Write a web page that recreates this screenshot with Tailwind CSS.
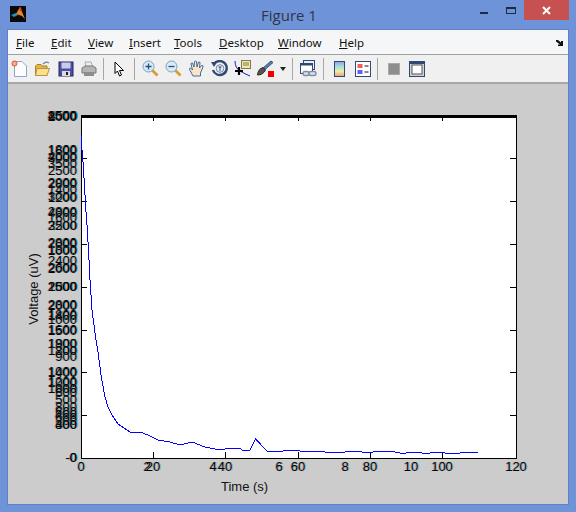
<!DOCTYPE html>
<html lang="en">
<head>
    <meta charset="UTF-8">
    <title>Figure 1</title>
    <script src="https://cdn.jsdelivr.net/npm/@tailwindcss/browser@4"></script>
</head>
<body class="w-[576px] h-[512px] overflow-hidden bg-[#6f93d9] font-['Noto_Sans',sans-serif]">
    <!-- title bar -->
    <header class="h-[30px] flex items-start relative">
        <svg class="absolute left-[10px] top-[6px] w-4 h-4" viewBox="0 0 16 16">
            <rect width="16" height="16" fill="#0a0a0a"/>
            <path d="M1 9 L6 7 L8 9 L4 11Z" fill="#2a8fb0"/>
            <path d="M6 8 L10 1 L15 13 L12 10 L9 9Z" fill="#e8862a"/>
            <path d="M9 2 L11 1 L12 6 L10 5Z" fill="#c84a18"/>
        </svg>
        <h1 class="flex-1 text-center text-[15px] leading-[30px] text-[#2f3646] pl-[2px] font-['Open_Sans',sans-serif]">Figure 1</h1>
        <div class="absolute left-[480px] top-[12px] w-[8px] h-[2px] bg-[#1d2b44]"></div>
        <div class="absolute left-[506px] top-[7px] w-[10px] h-[7px] border border-t-2 border-[#1d2b44]"></div>
        <div class="absolute left-[524px] top-0 w-[45px] h-[20px] bg-[#c75050] flex items-center justify-center">
            <svg class="w-[9px] h-[9px]" viewBox="0 0 9 9"><path d="M1 1 L8 8 M8 1 L1 8" stroke="#fff" stroke-width="2"/></svg>
        </div>
    </header>

    <main class="mx-[8px] w-[560px] h-[474px] flex flex-col bg-[#f5f6f7] outline outline-[#6380c4]">
        <!-- menu -->
        <nav class="h-[25px] pt-[1px] flex items-center relative text-[11.5px] text-[#111] border-b border-[#a0a0a0] pl-[8px]">
            <span class="w-[35px]"><u>F</u>ile</span>
            <span class="w-[37px]"><u>E</u>dit</span>
            <span class="w-[41px]"><u>V</u>iew</span>
            <span class="w-[45px]"><u>I</u>nsert</span>
            <span class="w-[45px]"><u>T</u>ools</span>
            <span class="w-[59px]"><u>D</u>esktop</span>
            <span class="w-[61px]"><u>W</u>indow</span>
            <span><u>H</u>elp</span>
            <svg class="absolute left-[548px] top-[10px] w-[7px] h-[6px]" viewBox="0 0 7 6"><path d="M0 0 H2 L5 2.5 V1 H7 V6 H2 V4.5 H4 L0 1.5Z" fill="#111"/></svg>
        </nav>

        <!-- toolbar -->
        <div class="h-[29px] flex items-center border-b-2 border-[#a6a6a6] bg-[#f0f0f0]">
            <span class="w-[23px] flex justify-center">
                <svg class="w-[17px] h-[18px]" viewBox="0 0 17 18"><path d="M3.5 1.5 H11 L15.5 6 V16.5 H3.5Z" fill="#fdfdff" stroke="#8fa6c4"/><circle cx="3.5" cy="3.5" r="2.5" fill="#f4b08c" stroke="#e0552a"/></svg>
            </span>
            <span class="w-[23px] flex justify-center">
                <svg class="w-[17px] h-[16px]" viewBox="0 0 17 16"><path d="M1.5 14.5 V5 L3 3.5 H7 L8 5 H13 V14.5Z" fill="#e2b64a" stroke="#a8852e"/><path d="M1.5 14.5 L3 7.5 H15.5 L13 14.5Z" fill="#fbe08e" stroke="#b8943a"/><path d="M9 3 Q12 0 15 2" fill="none" stroke="#6a86a8" stroke-width="1.2"/></svg>
            </span>
            <span class="w-[23px] flex justify-center">
                <svg class="w-[16px] h-[16px]" viewBox="0 0 16 16"><rect x="1" y="1" width="14" height="14" fill="#4a4fa8" stroke="#22265c"/><rect x="3.5" y="1.5" width="9" height="6" fill="#c9cbe8"/><rect x="4" y="10" width="8" height="5" fill="#dcdcdc"/><rect x="8" y="11" width="2" height="3" fill="#222"/></svg>
            </span>
            <span class="w-[23px] flex justify-center">
                <svg class="w-[16px] h-[16px]" viewBox="0 0 16 16"><path d="M4 1 H10 L12 6 H5Z" fill="#e8eef4" stroke="#9fb0c0"/><path d="M1 7 L4 5 H12 L15 7 V12 H1Z" fill="#b5b5b5" stroke="#777"/><rect x="3" y="11" width="10" height="4" fill="#8d8d8d"/></svg>
            </span>
            <span class="w-px h-[22px] ml-[3px] mr-[4px] bg-[#a6a6a6]"></span>
            <span class="w-[23px] flex justify-center">
                <svg class="w-[11px] h-[16px]" viewBox="0 0 11 16"><path d="M1 1 V12.5 L3.5 10 L5.5 15 L7.5 14 L5.5 9.5 H9.5Z" fill="#fff" stroke="#000"/></svg>
            </span>
            <span class="w-px h-[22px] ml-[3px] mr-[4px] bg-[#a6a6a6]"></span>
            <span class="w-[23px] flex justify-center">
                <svg class="w-[17px] h-[17px]" viewBox="0 0 17 17"><path d="M10 10 L15.5 15.5" stroke="#d99a2e" stroke-width="2.6"/><circle cx="6.5" cy="6.5" r="5.5" fill="#d7ebf7" stroke="#7d9fbd"/><path d="M3.5 6.5 H9.5 M6.5 3.5 V9.5" stroke="#24527e" stroke-width="1.3"/></svg>
            </span>
            <span class="w-[23px] flex justify-center">
                <svg class="w-[17px] h-[17px]" viewBox="0 0 17 17"><path d="M10 10 L15.5 15.5" stroke="#d99a2e" stroke-width="2.6"/><circle cx="6.5" cy="6.5" r="5.5" fill="#d7ebf7" stroke="#7d9fbd"/><path d="M3.5 6.5 H9.5" stroke="#24527e" stroke-width="1.3"/></svg>
            </span>
            <span class="w-[23px] flex justify-center">
                <svg class="w-[17px] h-[17px]" viewBox="0 0 17 17"><path d="M5 16 L1.5 9.5 Q1 8 2.5 8 L4.5 10 L3 4 Q3 2.5 4.5 3 L6 7 L6.5 1.5 Q7.5 0.5 8.5 1.5 L9 7 L10.5 2 Q12 1.5 12 3 L11.5 8 L13.5 5.5 Q15.5 5 15 7 L12.5 13 V16Z" fill="#fbe3c8" stroke="#3f6ca0"/></svg>
            </span>
            <span class="w-[23px] flex justify-center">
                <svg class="w-[17px] h-[17px]" viewBox="0 0 17 17"><path d="M3 4 A7 7 0 1 1 2 10" fill="none" stroke="#2e4a73" stroke-width="2.4"/><path d="M0 2 L6 2 L3 7Z" fill="#2e4a73"/><circle cx="9" cy="8.5" r="3.8" fill="#e8eef5" stroke="#6b86a8"/><path d="M7.5 7 H10.5 M9 7 V11" stroke="#2e4a73"/></svg>
            </span>
            <span class="w-[23px] flex justify-center">
                <svg class="w-[17px] h-[17px]" viewBox="0 0 17 17"><rect x="7.5" y="0.5" width="9" height="8" fill="#f1e8a8" stroke="#7d7a50"/><path d="M9 3 H15 M9 5 H15" stroke="#7d7a50"/><path d="M1 1 Q1 8 6 11 T16 16" fill="none" stroke="#1c1ce0"/><path d="M5 7 V15 M1 11 H9" stroke="#000" stroke-width="2.2"/></svg>
            </span>
            <span class="w-[23px] flex justify-center">
                <svg class="w-[17px] h-[17px]" viewBox="0 0 17 17"><path d="M14 1 L16 2.5 L8 9.5 L6 8Z" fill="#5c80b4" stroke="#35507a"/><path d="M6 7.5 Q1 9 0.5 15 Q6 15 8.5 10Z" fill="#56514a" stroke="#2a2a2a"/><rect x="11" y="11" width="6" height="6" fill="#f00000"/></svg>
            </span>
            <span class="w-[12px] flex justify-center">
                <svg class="w-[6px] h-[4px]" viewBox="0 0 6 4"><path d="M0 0 H6 L3 4Z" fill="#222"/></svg>
            </span>
            <span class="w-px h-[22px] ml-[3px] mr-[4px] bg-[#a6a6a6]"></span>
            <span class="w-[23px] flex justify-center">
                <svg class="w-[17px] h-[17px]" viewBox="0 0 17 17"><rect x="3.5" y="0.5" width="11" height="9" fill="#e9eef5" stroke="#2e4a73"/><rect x="0.5" y="3.5" width="12" height="10" fill="#fff" stroke="#2e4a73"/><rect x="0.5" y="3.5" width="12" height="2" fill="#2e4a73"/><rect x="3" y="11.5" width="6" height="4" rx="2" fill="#dde" stroke="#7f8ea6" stroke-width="1.4"/><rect x="9" y="11.5" width="7" height="4" rx="2" fill="#dde" stroke="#7f8ea6" stroke-width="1.4"/></svg>
            </span>
            <span class="w-px h-[22px] ml-[3px] mr-[4px] bg-[#a6a6a6]"></span>
            <span class="w-[23px] flex justify-center">
                <svg class="w-[11px] h-[16px]" viewBox="0 0 11 16">
                    <defs><linearGradient id="cbar" x1="0" y1="0" x2="0" y2="1"><stop offset="0" stop-color="#8f9fe8"/><stop offset=".35" stop-color="#a8e0e0"/><stop offset=".65" stop-color="#f0eea0"/><stop offset="1" stop-color="#e89a90"/></linearGradient></defs>
                    <rect x=".5" y=".5" width="10" height="15" fill="url(#cbar)" stroke="#2e4a73"/>
                </svg>
            </span>
            <span class="w-[23px] flex justify-center">
                <svg class="w-[16px] h-[16px]" viewBox="0 0 16 16"><rect x=".5" y=".5" width="15" height="15" fill="#fff" stroke="#2e4a73"/><rect x="2.5" y="3" width="5" height="4" fill="#e86060"/><rect x="2.5" y="9" width="5" height="4" fill="#6060e8"/><path d="M9.5 5 H13.5 M9.5 11 H13.5" stroke="#111"/></svg>
            </span>
            <span class="w-px h-[22px] ml-[3px] mr-[4px] bg-[#a6a6a6]"></span>
            <span class="w-[23px] flex justify-center">
                <svg class="w-[12px] h-[12px]" viewBox="0 0 12 12"><rect x=".5" y=".5" width="11" height="11" fill="#8e8e8e" stroke="#a8a8a8"/></svg>
            </span>
            <span class="w-[23px] flex justify-center">
                <svg class="w-[16px] h-[16px]" viewBox="0 0 16 16"><rect x=".5" y=".5" width="15" height="15" fill="#cfd3d8" stroke="#2e4a73"/><rect x="1" y="1" width="14" height="2" fill="#2e4a73"/><rect x="3" y="4" width="10" height="9" fill="#fff" stroke="#555"/></svg>
            </span>
        </div>

        <!-- figure -->
        <section id="figure" class="relative flex-1 bg-[#cccccc] overflow-hidden text-[13px] leading-[14px] font-['Liberation_Sans',sans-serif] text-black">
            <svg class="absolute inset-0 w-[560px] h-[420px]" viewBox="8 84 560 420">
                <rect x="81" y="116" width="435" height="342" fill="#fff"/>
                <g shape-rendering="crispEdges" stroke="#000" fill="none">
                    <path d="M81 116 H517" stroke-width="3"/>
                    <path d="M81.5 116 V458.5 H516.5 V116"/>
                    <path d="M81 158.5 H87 M81 201.5 H87 M81 244.5 H87 M81 287.5 H87 M81 330.5 H87 M81 372.5 H87 M81 415.5 H87"/>
                    <path d="M510 158.5 H516 M510 201.5 H516 M510 244.5 H516 M510 287.5 H516 M510 330.5 H516 M510 372.5 H516 M510 415.5 H516"/>
                    <path d="M153.5 458 V452 M225.5 458 V452 M298.5 458 V452 M370.5 458 V452 M442.5 458 V452"/>
                    <path d="M153.5 116 V121 M225.5 116 V121 M298.5 116 V121 M370.5 116 V121 M442.5 116 V121"/>
                </g>
                <polyline fill="none" stroke="#0000ff" shape-rendering="crispEdges" points="81.5,136 82,150 83,162 84,178 85,195 86,212 87,225 88.5,250 90,280 92,310 96,340 98,352 101,375 105,397 108,407 112,415 118,424 124,428 130,432 143,433 150,436 158,440 170,442 180,445 192,442 205,447 215,449 225,449 240,448 242,450 250,450 255.5,439 267,451 283,451 287,450 300,451 325,452 335,452.5 345,452 350,451.5 362,452 370,452.5 377,451.5 385,451.5 395,452 403,453.5 410,452.5 415,452 425,453.5 435,452.5 445,453 460,453 470,452.5 478,452.5"/>
            </svg>
            <div id="yticks" class="absolute left-0 top-0 w-[69px] [text-shadow:1px_0_0_rgba(0,170,210,.45),-1px_0_0_rgba(220,50,0,.3)]"></div>
            <div id="xticks" class="absolute left-0 top-0 [text-shadow:1px_0_0_rgba(0,170,210,.45),-1px_0_0_rgba(220,50,0,.3)]"></div>
            <span class="absolute left-[213px] top-[396px] text-[#111]">Time (s)</span>
            <span class="absolute left-[-12px] top-[198px] w-[76px] text-center -rotate-90 text-[#111] whitespace-nowrap">Voltage (uV)</span>
        </section>
    </main>

    <script>
        const yLabels = [
            [116, '2500'], [116, '3500'], [116, '4500'], [116, '1500'], [117, '2000'],
            [150, '1800'], [151, '1600'], [157, '4000'], [158, '3000'], [164, '3500'], [171, '2500'],
            [183, '2000'], [184, '2800'], [190, '1400'], [197, '3000'], [198, '1200'],
            [212, '2800'], [213, '4000'], [218, '1600'], [226, '2200'], [226, '3500'],
            [243, '2800'], [244, '2000'], [250, '1800'], [251, '1000'], [261, '2400'], [268, '2600'], [269, '2000'],
            [287, '2000'], [287, '1500'], [287, '2500'],
            [305, '2800'], [306, '2000'], [315, '1800'], [316, '1400'], [320, '1000'], [330, '1600'], [331, '1500'],
            [344, '1800'], [344, '1900'], [351, '800'], [351, '1200'], [357, '900'],
            [372, '1000'], [373, '1400'], [382, '1200'], [383, '1000'], [389, '800'], [389, '1000'], [393, '600'],
            [400, '500'], [407, '800'], [412, '600'], [415, '400'], [418, '600'], [421, '200'], [425, '400'], [425, '300'],
            [458, '-0'], [458, '0']
        ];
        const xLabels = [
            [81, '0'], [147, '2'], [153, '20'], [213, '4'], [225, '40'], [279, '6'], [298, '60'],
            [345, '8'], [370, '80'], [411, '10'], [442, '100'], [516, '120']
        ];
        const yBox = document.getElementById('yticks');
        yLabels.forEach(([y, text]) => {
            const el = document.createElement('div');
            el.className = 'absolute right-0 whitespace-nowrap';
            el.style.top = (y - 84 - 7) + 'px';
            el.textContent = text;
            yBox.appendChild(el);
        });
        const xBox = document.getElementById('xticks');
        xLabels.forEach(([x, text]) => {
            const el = document.createElement('div');
            el.className = 'absolute top-[376px] -translate-x-1/2 whitespace-nowrap';
            el.style.left = (x - 8) + 'px';
            el.textContent = text;
            xBox.appendChild(el);
        });
    </script>
</body>
</html>
